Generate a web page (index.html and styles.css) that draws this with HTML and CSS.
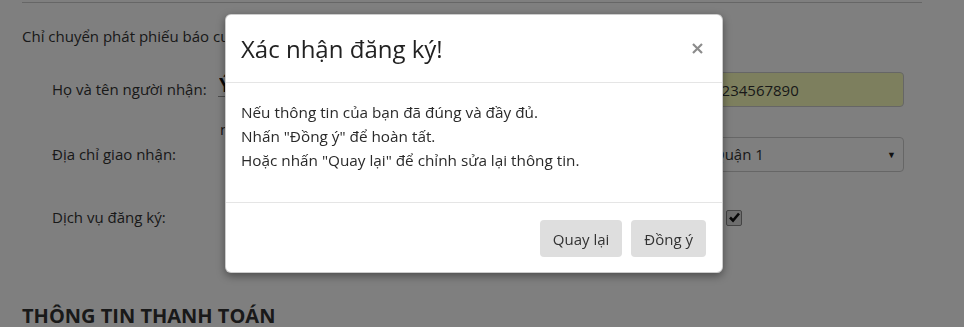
FILE: index.html
```html
<!DOCTYPE html>
<html lang="vi">
<head>
    <meta charset="UTF-8">
    <meta name="viewport" content="width=device-width, initial-scale=1.0">
    <title>Đăng ký nhận phiếu báo</title>
    <link rel="stylesheet" href="styles.css">
</head>
<body>
    <div class="page">
        <div class="top-rule"></div>
        <p class="intro">Chỉ chuyển phát phiếu báo cước</p>

        <div class="form-row row-name">
            <label class="row-label">Họ và tên người nhận:</label>
            <div class="name-col">
                <input class="name-input" type="text" value="Ý">
                <div class="help-text">n</div>
            </div>
            <input class="text-input autofill" type="text" value="1234567890">
        </div>

        <div class="form-row">
            <label class="row-label">Địa chỉ giao nhận:</label>
            <div class="middle-col"></div>
            <div class="select-box">Quận 1<span class="caret">▼</span></div>
        </div>

        <div class="form-row row-service">
            <label class="row-label">Dịch vụ đăng ký:</label>
            <div class="middle-col"></div>
            <div class="check-col">
                <span class="check-box">
                    <svg width="13" height="13" viewBox="0 0 13 13"><path d="M2 6.5 L5 9.5 L11 2.5" fill="none" stroke="#111" stroke-width="2.6"/></svg>
                </span>
            </div>
        </div>

        <h2 class="section-title">THÔNG TIN THANH TOÁN</h2>
    </div>

    <div class="backdrop"></div>

    <div class="modal">
        <div class="modal-header">
            <h3 class="modal-title">Xác nhận đăng ký!</h3>
            <button class="close" type="button">
                <svg width="11" height="11" viewBox="0 0 11 11"><path d="M1 1 L10 10 M10 1 L1 10" stroke="#8c8c8c" stroke-width="2.2"/></svg>
            </button>
        </div>
        <div class="modal-body">
            <p>Nếu thông tin của bạn đã đúng và đầy đủ.<br>
            Nhấn "Đồng ý" để hoàn tất.<br>
            Hoặc nhấn "Quay lại" để chỉnh sửa lại thông tin.</p>
        </div>
        <div class="modal-footer">
            <button class="btn" type="button">Quay lại</button>
            <button class="btn" type="button">Đồng ý</button>
        </div>
    </div>
</body>
</html>
```

FILE: styles.css
```css
body {
    margin: 0;
    font-family: "Open Sans", Arial, sans-serif;
    font-size: 15px;
    color: #333;
    background-color: #fff;
    overflow: hidden;
}
.page {
    width: 900px;
    margin-left: 22px;
    padding-top: 2px;
}
.top-rule {
    height: 1px;
    background-color: #ccc;
}
.intro {
    margin: 22px 0 0;
    line-height: 23px;
}
.form-row {
    display: grid;
    grid-template-columns: 166px 1fr 204px;
    align-items: center;
    height: 35px;
    padding: 0 18px 0 30px;
}
.row-name {
    align-items: start;
    height: 65px;
    margin-top: 24px;
}
.row-name .row-label {
    padding-top: 6px;
}
.row-service {
    margin-top: 28px;
}
.row-label {
    line-height: 23px;
}
.name-col {
    padding-right: 12px;
}
.name-input {
    display: block;
    width: 100%;
    box-sizing: border-box;
    height: 25px;
    border: none;
    border-bottom: 1px solid #999;
    padding: 0 1px;
    font-family: inherit;
    font-size: 20px;
    font-weight: bold;
    color: #111;
    background: transparent;
}
.help-text {
    margin-top: 24px;
    padding-left: 2px;
    line-height: 16px;
}
.text-input {
    box-sizing: border-box;
    height: 35px;
    border: 1px solid #ccc;
    border-radius: 4px;
    padding: 0 12px;
    font-family: inherit;
    font-size: 15px;
    color: #333;
}
.autofill {
    background-color: #faffbd;
}
.select-box {
    position: relative;
    box-sizing: border-box;
    height: 35px;
    line-height: 33px;
    border: 1px solid #ccc;
    border-radius: 4px;
    padding: 0 12px;
}
.caret {
    position: absolute;
    right: 7px;
    top: 0;
    font-size: 9px;
    color: #222;
}
.check-col {
    padding-left: 26px;
}
.check-box {
    display: flex;
    align-items: center;
    justify-content: center;
    width: 14px;
    height: 14px;
    border: 1px solid #888;
    border-radius: 2px;
    background-color: #dcdcdc;
}
.section-title {
    margin: 69px 0 0;
    font-size: 20px;
    line-height: 24px;
    font-weight: bold;
    color: #333;
}
.backdrop {
    position: fixed;
    inset: 0;
    background-color: rgba(0, 0, 0, 0.5);
}
.modal {
    position: fixed;
    top: 14px;
    left: 225px;
    width: 498px;
    box-sizing: border-box;
    background-color: #fff;
    border: 1px solid rgba(0, 0, 0, 0.2);
    border-radius: 6px;
    box-shadow: 0 3px 9px rgba(0, 0, 0, 0.4);
}
.modal-header {
    display: flex;
    align-items: center;
    justify-content: space-between;
    padding: 15px;
    border-bottom: 1px solid #e5e5e5;
}
.modal-title {
    margin: 0;
    font-size: 24px;
    font-weight: normal;
    line-height: 37px;
    color: #222;
}
.close {
    display: flex;
    margin-right: 4px;
    padding: 0;
    border: none;
    background: none;
    cursor: pointer;
}
.modal-body {
    height: 120px;
    box-sizing: border-box;
    padding: 17px 15px 0;
    border-bottom: 1px solid #e5e5e5;
}
.modal-body p {
    margin: 0;
    font-size: 15.3px;
    line-height: 24px;
    color: #2a2a2a;
}
.modal-footer {
    display: flex;
    justify-content: flex-end;
    gap: 9px;
    padding: 17px 16px 15px;
}
.btn {
    height: 37px;
    padding: 0 13px;
    border: none;
    border-radius: 4px;
    background-color: #dedede;
    font-family: inherit;
    font-size: 15px;
    color: #333;
    cursor: pointer;
}
```
